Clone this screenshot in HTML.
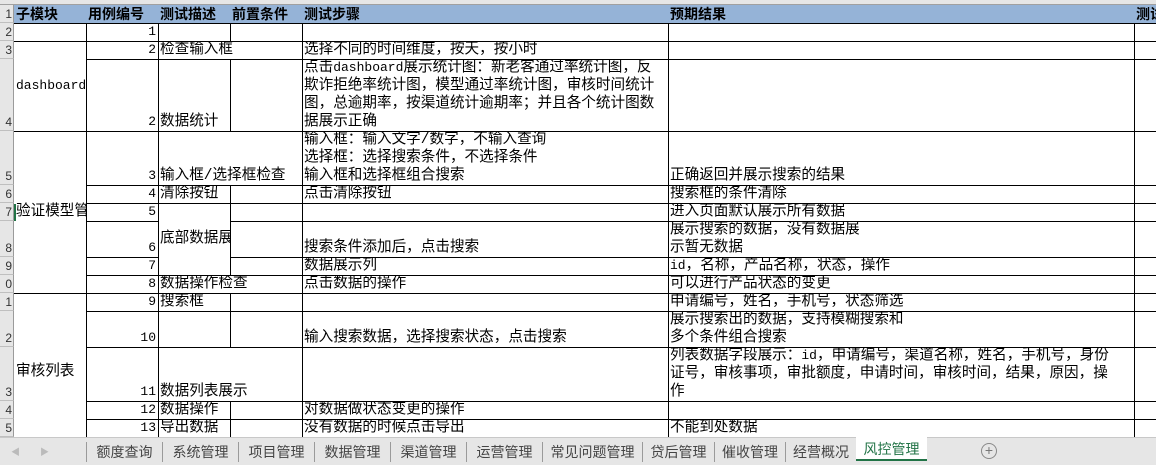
<!DOCTYPE html>
<html><head><meta charset="utf-8"><style>
*{margin:0;padding:0;box-sizing:border-box}
body{width:1156px;height:465px;overflow:hidden;background:#fff;position:relative;font-family:"Liberation Mono","Noto Sans CJK SC",monospace;font-size:14.6px;color:#000}
.l{font-size:13px}
.c{position:absolute;border-right:1px solid #000;border-bottom:1px solid #000;overflow:hidden;white-space:nowrap;line-height:18px;display:flex;flex-direction:column;justify-content:flex-end;padding-left:2px;padding-right:2px}
.m{justify-content:center}
.r{text-align:right;font-size:13px}
.h{background:#95b3d7;font-weight:bold;font-size:14px;justify-content:center;font-family:"Noto Sans CJK SC",sans-serif}
.rh{position:absolute;left:0;width:14px;background:#e6e6e6;border-bottom:1px solid #bfbfbf;border-right:1px solid #9b9b9b;font-size:12px;line-height:16px;text-align:right;overflow:hidden;color:#333;display:flex;flex-direction:column;justify-content:flex-end;padding-right:1px;font-family:"Liberation Sans",sans-serif}
.tabs{position:absolute;left:0;top:437px;width:1156px;height:28px;background:#e6e6e6;border-top:1px solid #c8c8c8}
.t{position:absolute;top:4px;height:20px;line-height:20px;font-size:14px;color:#444;text-align:center;border-left:1px solid #9a9a9a;font-family:"Noto Sans CJK SC",sans-serif}
</style></head><body>
<div style="position:absolute;left:0;top:0;width:1156px;height:5px;background:#e6e6e6;border-bottom:1px solid #a0a0a0"></div>
<div class="rh" style="top:5px;height:18px">1</div>
<div class="rh" style="top:23px;height:18px">2</div>
<div class="rh" style="top:41px;height:18px">3</div>
<div class="rh" style="top:59px;height:72px">4</div>
<div class="rh" style="top:131px;height:54px">5</div>
<div class="rh" style="top:185px;height:18px">6</div>
<div class="rh" style="top:203px;height:18px">7</div>
<div class="rh" style="top:221px;height:36px">8</div>
<div class="rh" style="top:257px;height:18px">9</div>
<div class="rh" style="top:275px;height:18px">0</div>
<div class="rh" style="top:293px;height:18px">1</div>
<div class="rh" style="top:311px;height:36px">2</div>
<div class="rh" style="top:347px;height:54px">3</div>
<div class="rh" style="top:401px;height:18px">4</div>
<div class="rh" style="top:419px;height:18px">5</div>

<div class="c h" style="left:14px;top:5px;width:73px;height:19px">子模块</div>
<div class="c h" style="left:86px;top:5px;width:73px;height:19px">用例编号</div>
<div class="c h" style="left:158px;top:5px;width:73px;height:19px">测试描述</div>
<div class="c h" style="left:230px;top:5px;width:73px;height:19px">前置条件</div>
<div class="c h" style="left:302px;top:5px;width:367px;height:19px">测试步骤</div>
<div class="c h" style="left:668px;top:5px;width:467px;height:19px">预期结果</div>
<div class="c h" style="left:1134px;top:5px;width:30px;height:19px">测试</div>

<div class="c" style="left:14px;top:23px;width:73px;height:19px"></div>
<div class="c m" style="left:14px;top:41px;width:73px;height:91px"><span class="l">dashboard</span></div>
<div class="c m" style="left:14px;top:131px;width:73px;height:163px">验证模型管</div>
<div style="position:absolute;left:14px;top:204px;width:2px;height:17px;background:#217346"></div>
<div class="c m" style="left:14px;top:293px;width:73px;height:145px;padding-top:14px">审核列表</div>

<div class="c r" style="left:86px;top:23px;width:73px;height:19px">1</div>
<div class="c" style="left:158px;top:23px;width:73px;height:19px"></div>
<div class="c" style="left:230px;top:23px;width:73px;height:19px"></div>
<div class="c" style="left:302px;top:23px;width:367px;height:19px"></div>
<div class="c" style="left:668px;top:23px;width:467px;height:19px"></div>
<div class="c" style="left:1134px;top:23px;width:30px;height:19px"></div>

<div class="c r" style="left:86px;top:41px;width:73px;height:19px">2</div>
<div class="c" style="left:158px;top:41px;width:145px;height:19px">检查输入框</div>
<div class="c" style="left:302px;top:41px;width:367px;height:19px">选择不同的时间维度，按天，按小时</div>
<div class="c" style="left:668px;top:41px;width:467px;height:19px"></div>
<div class="c" style="left:1134px;top:41px;width:30px;height:19px"></div>

<div class="c r" style="left:86px;top:59px;width:73px;height:73px">2</div>
<div class="c" style="left:158px;top:59px;width:73px;height:73px">数据统计</div>
<div class="c" style="left:230px;top:59px;width:73px;height:73px"></div>
<div class="c" style="left:302px;top:59px;width:367px;height:73px"><span>点击<span class="l">dashboard</span>展示统计图：新老客通过率统计图，反</span><span>欺诈拒绝率统计图，模型通过率统计图，审核时间统计</span><span>图，总逾期率，按渠道统计逾期率；并且各个统计图数</span><span>据展示正确</span></div>
<div class="c" style="left:668px;top:59px;width:467px;height:73px"></div>
<div class="c" style="left:1134px;top:59px;width:30px;height:73px"></div>

<div class="c r" style="left:86px;top:131px;width:73px;height:55px">3</div>
<div class="c" style="left:158px;top:131px;width:145px;height:55px">输入框/选择框检查</div>
<div class="c" style="left:302px;top:131px;width:367px;height:55px">输入框：输入文字/数字，不输入查询<br>选择框：选择搜索条件，不选择条件<br>输入框和选择框组合搜索</div>
<div class="c" style="left:668px;top:131px;width:467px;height:55px">正确返回并展示搜索的结果</div>
<div class="c" style="left:1134px;top:131px;width:30px;height:55px"></div>

<div class="c r" style="left:86px;top:185px;width:73px;height:19px">4</div>
<div class="c" style="left:158px;top:185px;width:73px;height:19px">清除按钮</div>
<div class="c" style="left:230px;top:185px;width:73px;height:19px"></div>
<div class="c" style="left:302px;top:185px;width:367px;height:19px">点击清除按钮</div>
<div class="c" style="left:668px;top:185px;width:467px;height:19px">搜索框的条件清除</div>
<div class="c" style="left:1134px;top:185px;width:30px;height:19px"></div>

<div class="c r" style="left:86px;top:203px;width:73px;height:19px">5</div>
<div class="c m" style="left:158px;top:203px;width:73px;height:73px">底部数据展</div>
<div class="c" style="left:230px;top:203px;width:73px;height:19px"></div>
<div class="c" style="left:302px;top:203px;width:367px;height:19px"></div>
<div class="c" style="left:668px;top:203px;width:467px;height:19px">进入页面默认展示所有数据</div>
<div class="c" style="left:1134px;top:203px;width:30px;height:19px"></div>

<div class="c r" style="left:86px;top:221px;width:73px;height:37px">6</div>
<div class="c" style="left:230px;top:221px;width:73px;height:37px"></div>
<div class="c" style="left:302px;top:221px;width:367px;height:37px">搜索条件添加后，点击搜索</div>
<div class="c" style="left:668px;top:221px;width:467px;height:37px">展示搜索的数据，没有数据展<br>示暂无数据</div>
<div class="c" style="left:1134px;top:221px;width:30px;height:37px"></div>

<div class="c r" style="left:86px;top:257px;width:73px;height:19px">7</div>
<div class="c" style="left:230px;top:257px;width:73px;height:19px"></div>
<div class="c" style="left:302px;top:257px;width:367px;height:19px">数据展示列</div>
<div class="c" style="left:668px;top:257px;width:467px;height:19px"><span><span class="l">id</span>，名称，产品名称，状态，操作</span></div>
<div class="c" style="left:1134px;top:257px;width:30px;height:19px"></div>

<div class="c r" style="left:86px;top:275px;width:73px;height:19px">8</div>
<div class="c" style="left:158px;top:275px;width:145px;height:19px">数据操作检查</div>
<div class="c" style="left:302px;top:275px;width:367px;height:19px">点击数据的操作</div>
<div class="c" style="left:668px;top:275px;width:467px;height:19px">可以进行产品状态的变更</div>
<div class="c" style="left:1134px;top:275px;width:30px;height:19px"></div>

<div class="c r" style="left:86px;top:293px;width:73px;height:19px">9</div>
<div class="c" style="left:158px;top:293px;width:73px;height:19px">搜索框</div>
<div class="c" style="left:230px;top:293px;width:73px;height:19px"></div>
<div class="c" style="left:302px;top:293px;width:367px;height:19px"></div>
<div class="c" style="left:668px;top:293px;width:467px;height:19px">申请编号，姓名，手机号，状态筛选</div>
<div class="c" style="left:1134px;top:293px;width:30px;height:19px"></div>

<div class="c r" style="left:86px;top:311px;width:73px;height:37px">10</div>
<div class="c" style="left:158px;top:311px;width:73px;height:37px"></div>
<div class="c" style="left:230px;top:311px;width:73px;height:37px"></div>
<div class="c" style="left:302px;top:311px;width:367px;height:37px">输入搜索数据，选择搜索状态，点击搜索</div>
<div class="c" style="left:668px;top:311px;width:467px;height:37px">展示搜索出的数据，支持模糊搜索和<br>多个条件组合搜索</div>
<div class="c" style="left:1134px;top:311px;width:30px;height:37px"></div>

<div class="c r" style="left:86px;top:347px;width:73px;height:55px">11</div>
<div class="c" style="left:158px;top:347px;width:145px;height:55px">数据列表展示</div>
<div class="c" style="left:302px;top:347px;width:367px;height:55px"></div>
<div class="c" style="left:668px;top:347px;width:467px;height:55px"><span>列表数据字段展示：<span class="l">id</span>，申请编号，渠道名称，姓名，手机号，身份</span><span>证号，审核事项，审批额度，申请时间，审核时间，结果，原因，操</span><span>作</span></div>
<div class="c" style="left:1134px;top:347px;width:30px;height:55px"></div>

<div class="c r" style="left:86px;top:401px;width:73px;height:19px">12</div>
<div class="c" style="left:158px;top:401px;width:73px;height:19px">数据操作</div>
<div class="c" style="left:230px;top:401px;width:73px;height:19px"></div>
<div class="c" style="left:302px;top:401px;width:367px;height:19px">对数据做状态变更的操作</div>
<div class="c" style="left:668px;top:401px;width:467px;height:19px"></div>
<div class="c" style="left:1134px;top:401px;width:30px;height:19px"></div>

<div class="c r" style="left:86px;top:419px;width:73px;height:19px">13</div>
<div class="c" style="left:158px;top:419px;width:73px;height:19px">导出数据</div>
<div class="c" style="left:230px;top:419px;width:73px;height:19px"></div>
<div class="c" style="left:302px;top:419px;width:367px;height:19px">没有数据的时候点击导出</div>
<div class="c" style="left:668px;top:419px;width:467px;height:19px">不能到处数据</div>
<div class="c" style="left:1134px;top:419px;width:30px;height:19px"></div>

<div class="tabs">
<span style="position:absolute;left:11px;top:7px;font-size:9px;color:#bbb">◀</span>
<span style="position:absolute;left:40px;top:7px;font-size:9px;color:#bbb">▶</span>
<div class="t" style="left:86px;width:76px">额度查询</div>
<div class="t" style="left:162px;width:76px">系统管理</div>
<div class="t" style="left:238px;width:76px">项目管理</div>
<div class="t" style="left:314px;width:76px">数据管理</div>
<div class="t" style="left:390px;width:76px">渠道管理</div>
<div class="t" style="left:466px;width:76px">运营管理</div>
<div class="t" style="left:542px;width:100px">常见问题管理</div>
<div class="t" style="left:642px;width:72px">贷后管理</div>
<div class="t" style="left:714px;width:71px">催收管理</div>
<div class="t" style="left:785px;width:71px">经营概况</div>
<div style="position:absolute;left:856px;top:-1px;width:71px;height:24px;background:#fff;border-bottom:2px solid #217346;color:#217346;font-size:14px;line-height:24px;text-align:center;font-family:'Noto Sans CJK SC',sans-serif">风控管理</div>
<div style="position:absolute;left:981px;top:5px;width:16px;height:16px;border:1px solid #888;border-radius:50%;color:#777;font-size:14px;line-height:13px;text-align:center;font-family:'Liberation Sans',sans-serif">+</div>
</div>
</body></html>
